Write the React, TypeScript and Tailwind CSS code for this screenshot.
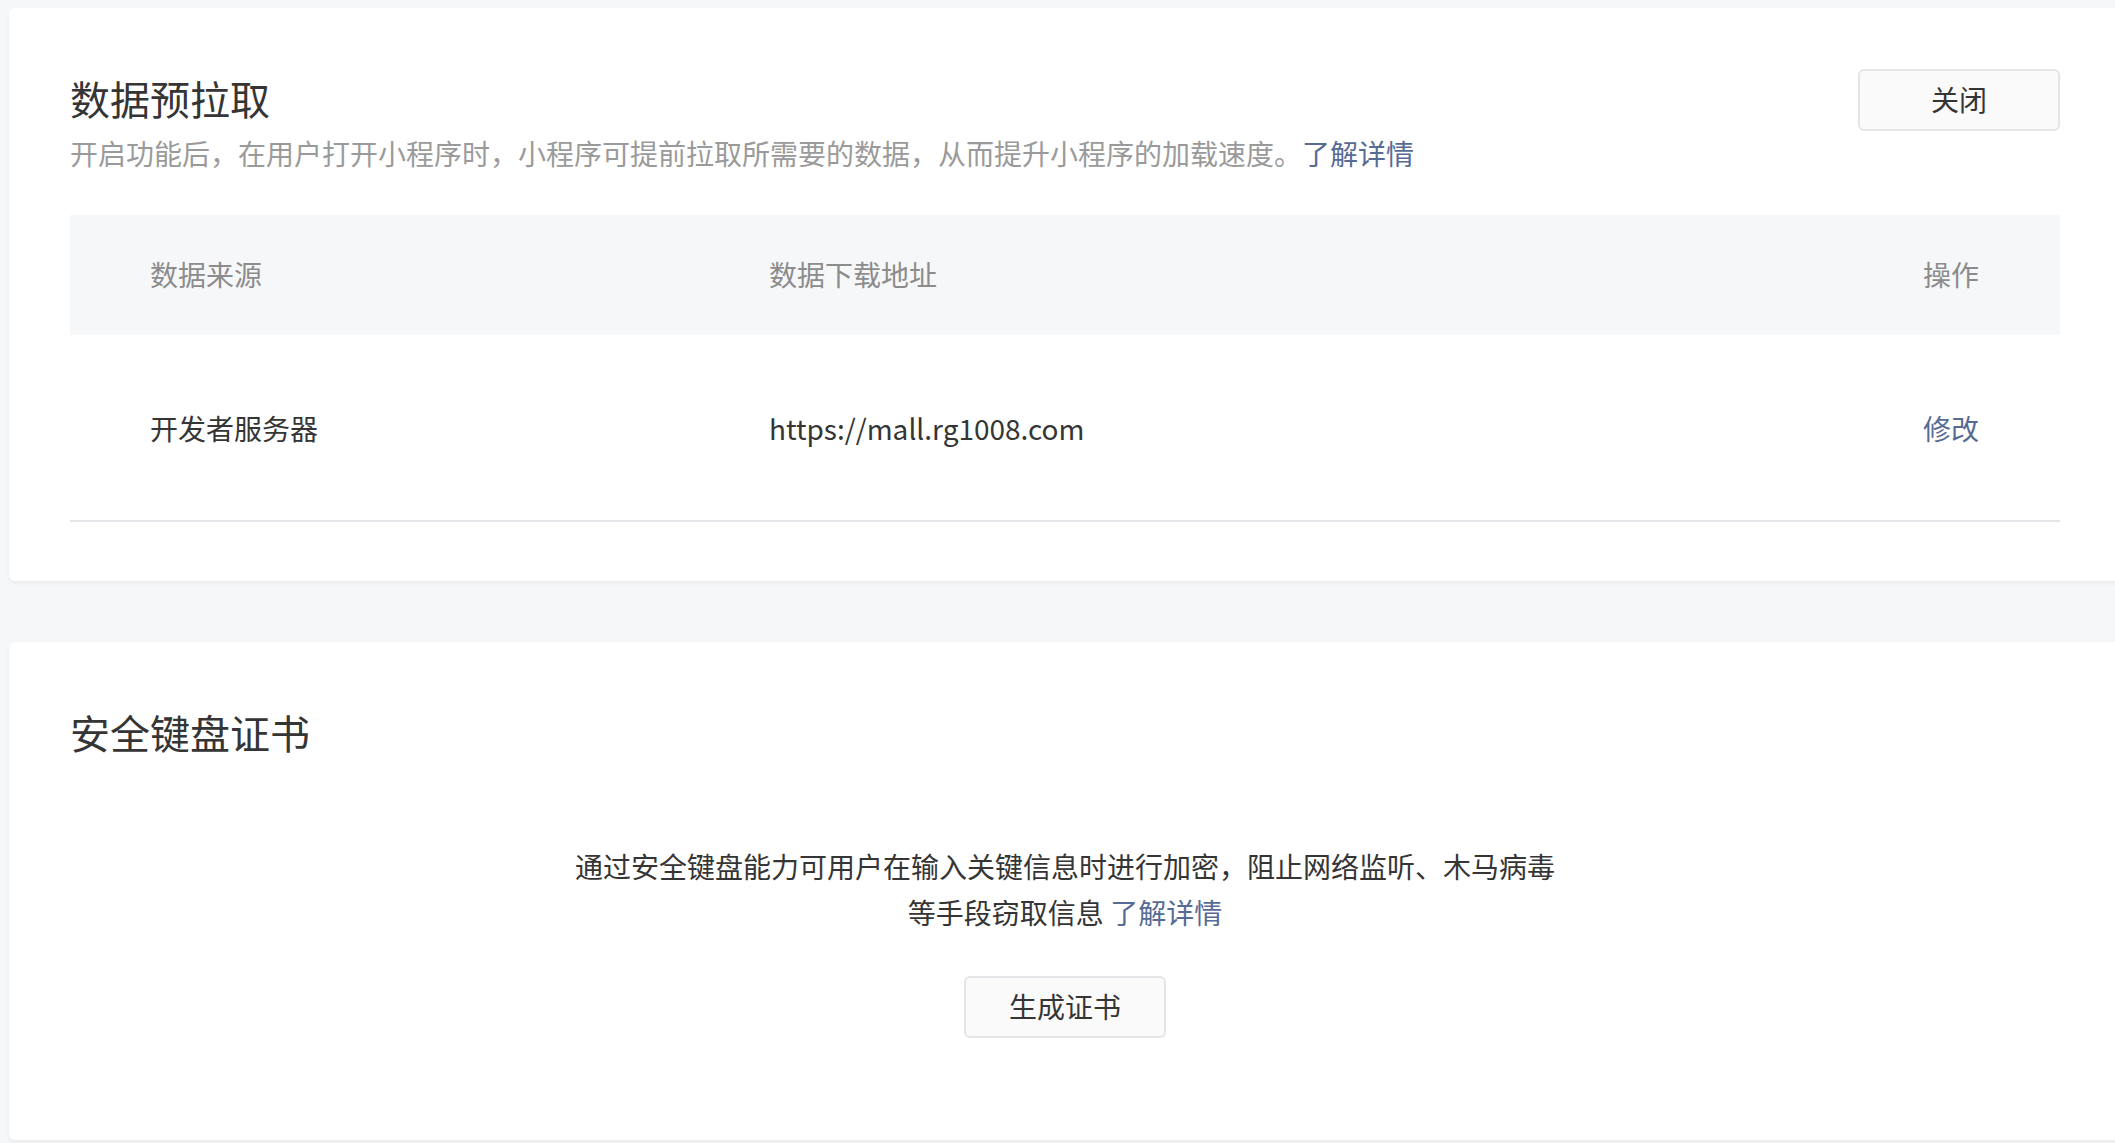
import React from 'react';

const font = { fontFamily: '"Noto Sans CJK SC", "Noto Sans", sans-serif' };

const Button: React.FC<{ label: string }> = ({ label }) => (
  <button className="w-[202px] h-[62px] rounded-[6px] border-2 border-[#e3e5e9] bg-[#fafafa] pb-[2px] text-[28px] leading-none text-[#353535]">
    {label}
  </button>
);

const App: React.FC = () => {
  return (
    <div className="min-h-[1143px] w-full overflow-hidden bg-[#f6f7f9]" style={font}>
      <div className="pt-[8px] pl-[9px] pb-[3px]">
        {/* 数据预拉取 */}
        <section className="w-[2112px] rounded-[6px] bg-white px-[61px] pt-[61px] pb-[59px] shadow-[0_2px_4px_rgba(0,0,0,0.05)]">
          <div className="flex items-start justify-between">
            <div>
              <h2 className="mt-[1px] text-[40px] leading-[56px] text-[#353535]">数据预拉取</h2>
              <p className="mt-[6px] text-[28px] leading-[42px] text-[#9a9a9a]">
                开启功能后，在用户打开小程序时，小程序可提前拉取所需要的数据，从而提升小程序的加载速度。
                <a className="text-[#576b95]">了解详情</a>
              </p>
            </div>
            <Button label="关闭" />
          </div>

          <div className="mt-[41px]">
            <div className="grid h-[120px] grid-cols-[619px_1fr_auto] items-center bg-[#f6f7f9] pl-[80px] pr-[81px] pb-[2px] text-[28px] text-[#8c8c8c]">
              <div>数据来源</div>
              <div>数据下载地址</div>
              <div>操作</div>
            </div>
            <div className="grid h-[187px] grid-cols-[619px_1fr_auto] items-center border-b-2 border-[#e5e6ea] pl-[80px] pr-[81px] text-[28px] text-[#353535]">
              <div>开发者服务器</div>
              <div>https://mall.rg1008.com</div>
              <a className="text-[#576b95]">修改</a>
            </div>
          </div>
        </section>

        {/* 安全键盘证书 */}
        <section className="mt-[61px] h-[498px] w-[2112px] rounded-[6px] bg-white px-[61px] pt-[62px] shadow-[0_2px_4px_rgba(0,0,0,0.05)]">
          <h2 className="text-[40px] leading-[56px] text-[#353535]">安全键盘证书</h2>
          <div className="mt-[83px] flex flex-col items-center">
            <p className="text-center text-[28px] leading-[46px] text-[#353535]">
              通过安全键盘能力可用户在输入关键信息时进行加密，阻止网络监听、木马病毒
              <br />
              等手段窃取信息 <a className="text-[#576b95]">了解详情</a>
            </p>
            <div className="mt-[41px]">
              <Button label="生成证书" />
            </div>
          </div>
        </section>
      </div>
    </div>
  );
};

export default App;
